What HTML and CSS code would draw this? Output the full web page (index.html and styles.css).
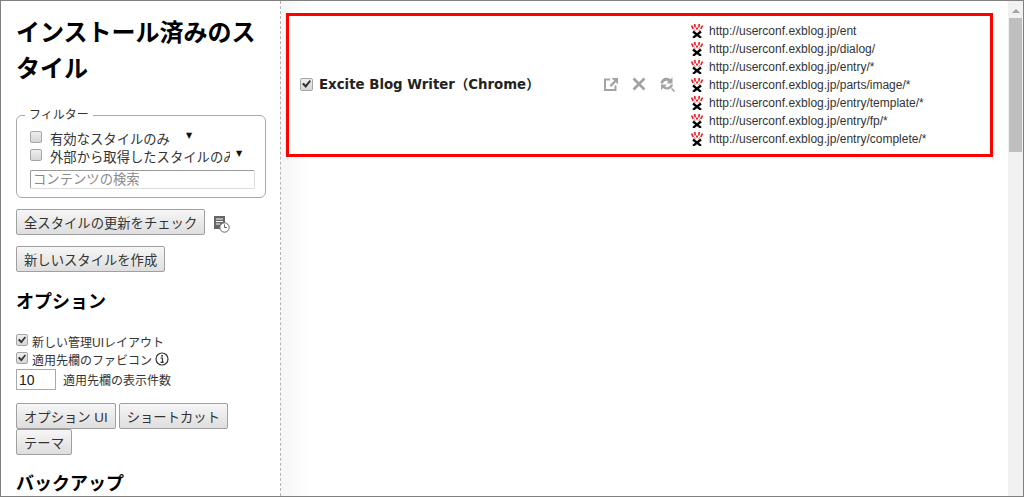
FILE: index.html
```html
<!DOCTYPE html>
<html lang="ja">
<head>
<meta charset="utf-8">
<title>Stylus</title>
<link rel="stylesheet" href="styles.css">
</head>
<body>
<svg class="defs" width="0" height="0" aria-hidden="true">
  <symbol id="fav" viewBox="0 0 14 14">
    <path d="M1.500 1.500 3.200 5M4.700 0 5.200 3.500M9.300 0 8.800 3.500M12.500 1.500 10.800 5" stroke="#f0141e" stroke-width="1.600" fill="none"/>
    <path d="M4 5.500 5.500 7M10 5.500 8.500 7" stroke="#f78f93" stroke-width="1.200" fill="none"/>
    <rect x="6" y="3.500" width="2" height="2" fill="#ee1c25"/>
    <path d="M3 7.500 11 13.800M11 7.500 3 13.800" stroke="#000" stroke-width="2.300" fill="none"/>
    <rect x="5.400" y="9" width="3.200" height="3" fill="#000"/>
  </symbol>
</svg>
<div class="window">
  <aside class="sidebar">
    <h1>インストール済みのスタイル</h1>
    <fieldset class="filters">
      <legend>フィルター</legend>
      <div class="filter-row">
        <input type="checkbox" class="check">
        <span class="filter-label">有効なスタイルのみ</span>
        <span class="caret caret-far">▼</span>
      </div>
      <div class="filter-row">
        <input type="checkbox" class="check">
        <span class="filter-label">外部から取得したスタイルのみ</span>
        <span class="caret">▼</span>
      </div>
      <input type="text" class="search" placeholder="コンテンツの検索">
    </fieldset>
    <div class="btn-line">
      <button class="btn">全スタイルの更新をチェック</button>
      <svg class="history" width="16" height="17" viewBox="0 0 16 17">
        <rect x="0" y="0" width="11" height="13" fill="#666"/>
        <path d="M2 3h7M2 5.500h7M2 8h4" stroke="#fff" stroke-width="1"/>
        <circle cx="10.500" cy="11.500" r="4.700" fill="#fff" stroke="#666" stroke-width="1"/>
        <path d="M10.500 8.500v3h2.500" fill="none" stroke="#666" stroke-width="1"/>
      </svg>
    </div>
    <div class="btn-line">
      <button class="btn">新しいスタイルを作成</button>
    </div>
    <h2 class="options-title">オプション</h2>
    <label class="opt first-opt"><input type="checkbox" class="check small" checked>新しい管理UIレイアウト</label>
    <label class="opt"><input type="checkbox" class="check small" checked>適用先欄のファビコン
      <svg class="info" width="14" height="14" viewBox="0 0 14 14">
        <circle cx="7" cy="7" r="6" fill="none" stroke="#333" stroke-width="1.200"/>
        <rect x="6.200" y="3" width="1.600" height="1.700" fill="#333"/>
        <path d="M5.500 6h2v4h1M5.500 10.300h3.200" fill="none" stroke="#333" stroke-width="1.200"/>
      </svg>
    </label>
    <div class="number-row">
      <input type="text" class="number" value="10">
      <span>適用先欄の表示件数</span>
    </div>
    <div class="btn-wrap">
      <button class="btn">オプション UI</button>
      <button class="btn">ショートカット</button>
      <button class="btn">テーマ</button>
    </div>
    <h2 class="backup-title">バックアップ</h2>
  </aside>
  <main class="content">
    <section class="entry">
      <input type="checkbox" class="check entry-check" checked>
      <span class="entry-name">Excite Blog Writer（Chrome）</span>
      <div class="actions">
        <svg width="16" height="16" viewBox="0 0 16 16"><path d="M7 3.500H2V14H12.500V9.500" fill="none" stroke="#a3a3a3" stroke-width="2"/><path d="M8.500 2H15V8.500L12.800 6.300 8.200 10.900 6.600 9.300 11.200 4.700z" fill="#a3a3a3"/></svg>
        <svg width="16" height="16" viewBox="0 0 16 16"><path d="M2.500 2.500l11 11M13.500 2.500l-11 11" stroke="#a3a3a3" stroke-width="2.800" fill="none"/></svg>
        <svg width="16" height="16" viewBox="0 0 16 16"><path d="M1.500 7.500C2 3.500 5 1.500 8 1.800c1.500.2 2.500.8 3.300 1.500L13.500 1.500V7.500H7.500l2-2C8 4.200 5 4.500 4 7.500z" fill="#a3a3a3"/><path d="M14 8.500c-.5 3.700-3.500 5.200-6.500 5-1.500-.2-2.500-.8-3.300-1.500L2 14V8.500H8l-2 1.800C7.500 11.800 10.500 11.500 11.500 8.500z" fill="#a3a3a3"/><path d="M12.500 12.500l3 3" stroke="#a3a3a3" stroke-width="1.600"/></svg>
      </div>
      <ul class="targets">
        <li><svg class="favicon"><use href="#fav"/></svg>http://userconf.exblog.jp/ent</li>
        <li><svg class="favicon"><use href="#fav"/></svg>http://userconf.exblog.jp/dialog/</li>
        <li><svg class="favicon"><use href="#fav"/></svg>http://userconf.exblog.jp/entry/*</li>
        <li><svg class="favicon"><use href="#fav"/></svg>http://userconf.exblog.jp/parts/image/*</li>
        <li><svg class="favicon"><use href="#fav"/></svg>http://userconf.exblog.jp/entry/template/*</li>
        <li><svg class="favicon"><use href="#fav"/></svg>http://userconf.exblog.jp/entry/fp/*</li>
        <li><svg class="favicon"><use href="#fav"/></svg>http://userconf.exblog.jp/entry/complete/*</li>
      </ul>
    </section>
  </main>
  <div class="scrollbar">
    <span class="arrow"></span>
    <span class="thumb"></span>
  </div>
</div>
</body>
</html>
```
FILE: styles.css
```css
* { box-sizing: border-box; }
html, body { margin: 0; height: 100%; overflow: hidden; }
body {
  font-family: "Liberation Sans", "Noto Sans CJK JP", sans-serif;
  font-size: 13.33px;
  color: #222;
  background: #fff;
}
.defs { position: absolute; }
.window {
  display: flex;
  height: 497px;
  border: 1px solid #808080;
}
.sidebar {
  width: 280px;
  flex: none;
  padding: 0 15px;
  overflow: hidden;
  border-right: 1px dashed #b4b4b4;
  background: #fff;
}
h1 {
  margin: 14px 0 0;
  font-size: 24px;
  line-height: 36px;
  font-weight: bold;
  color: #000;
  width: 245px;
}
.filters {
  margin: 21px 0 0;
  padding: 7px 10px 4px 13px;
  width: 249px;
  height: 90px;
  border: 1px solid #a9a9a9;
  border-radius: 6px;
}
legend { padding: 0 4px; margin-left: -5px; line-height: 14px; font-size: 12px; color: #333; }
.filter-row {
  display: flex;
  align-items: center;
  height: 18px;
}
.check {
  appearance: none;
  -webkit-appearance: none;
  margin: 0;
  width: 12px;
  height: 12px;
  flex: none;
  border: 1px solid #a6a6a6;
  border-radius: 2px;
  background: linear-gradient(#eeeeee, #d6d6d6);
  position: relative;
}
.check:checked::after {
  content: "";
  position: absolute;
  inset: 1px;
  background: #333;
  clip-path: polygon(0 50%, 20% 35%, 40% 58%, 85% 5%, 100% 20%, 42% 95%);
}
.filter-row .check { margin-top: -2px; }
.filter-label {
  margin-left: 8px;
  max-width: 180px;
  overflow: hidden;
  white-space: nowrap;
  color: #333;
}
.caret {
  font-family: "DejaVu Sans", sans-serif;
  font-size: 8px;
  color: #111;
  margin: -5px 0 0 6px;
}
.caret-far { margin-left: 16px; }
.search {
  display: block;
  width: 225px;
  height: 19px;
  margin-top: 5px;
  padding: 0 2px;
  border: 1px solid #dcdcdc;
  border-top-color: #9a9a9a;
  border-left-color: #9a9a9a;
  border-radius: 2px;
  font: inherit;
  background: #fff;
}
.search::placeholder { color: #8a8a8a; opacity: 1; }
.btn {
  font: inherit;
  height: 26px;
  padding: 0 7px;
  border: 1px solid #a0a0a0;
  border-radius: 2px;
  background: linear-gradient(#f6f6f6, #dedede);
  color: #333;
  white-space: nowrap;
}
.btn-line { display: flex; align-items: center; margin-top: 11px; }
.history { margin: 4px 0 0 9px; }
h2 {
  margin: 0;
  font-size: 18px;
  font-weight: bold;
  color: #000;
  line-height: 26px;
}
.options-title { margin-top: 17px; }
.opt {
  display: flex;
  align-items: center;
  height: 18px;
  font-size: 12px;
  color: #333;
}
.first-opt { margin-top: 17px; }
.check.small { margin: -2px 4px 0 0; }
.info { margin-left: 3px; }
.number-row {
  display: flex;
  align-items: center;
  margin-top: 1px;
  font-size: 12px;
  color: #333;
}
.number {
  width: 40px;
  height: 21px;
  padding: 0 2px;
  border: 1px solid #a9a9a9;
  font: 14px "Liberation Sans", sans-serif;
  color: #222;
}
.number-row span { margin-left: 7px; }
.btn-wrap { display: flex; flex-wrap: wrap; gap: 0 3px; margin-top: 13px; width: 245px; }
.backup-title { margin-top: 16px; }
.content {
  flex: 1;
  min-width: 0;
  padding: 12px 15px 0 5px;
  background: linear-gradient(to right, #f6f6f6, #fff 30px);
}
.entry {
  display: flex;
  align-items: center;
  height: 144px;
  border: 3px solid #f00;
  background: #fff;
  padding-left: 11px;
}
.entry-check { width: 13px; height: 13px; margin-top: -2px; }
.entry-name {
  margin: -3px 0 0 6px;
  width: 284px;
  font-size: 13.33px;
  font-weight: bold;
  font-family: "DejaVu Sans", "Noto Sans CJK JP", sans-serif;
  color: #222;
  white-space: nowrap;
}
.actions { display: flex; gap: 12px; width: 87px; margin-top: -2px; }
.targets { list-style: none; margin: 0; padding: 0; }
.targets li {
  display: flex;
  align-items: center;
  height: 18px;
  font-size: 12px;
  color: #333;
}
.favicon { width: 14px; height: 14px; margin-right: 5px; flex: none; }
.scrollbar {
  width: 15px;
  flex: none;
  background: #f1f1f1;
  display: flex;
  flex-direction: column;
  align-items: center;
}
.arrow {
  margin-top: 8px;
  border: 4px solid transparent;
  border-top: 0;
  border-bottom: 4px solid #a3a3a3;
  width: 0;
}
.thumb {
  width: 13px;
  height: 134px;
  margin-top: 5px;
  background: #bfbfbf;
}
```
